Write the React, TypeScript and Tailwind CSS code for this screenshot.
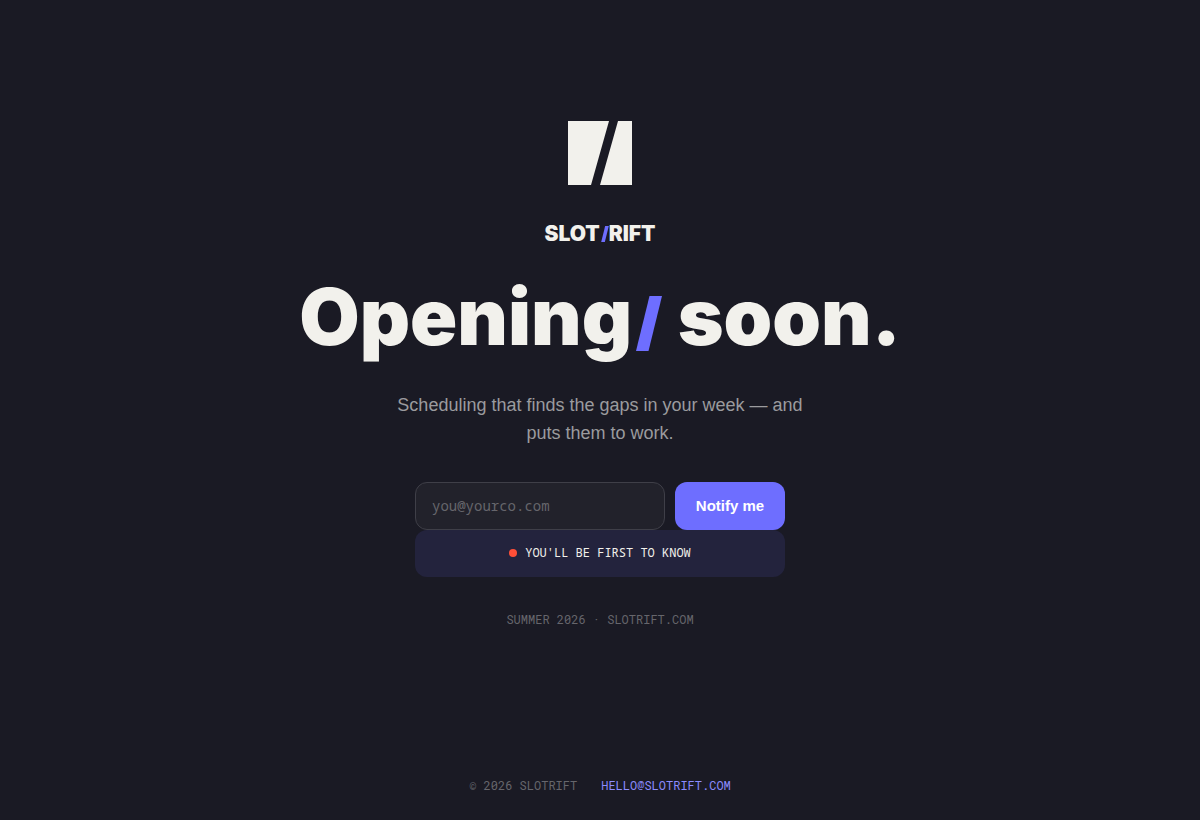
import { useState, type FormEvent } from "react";

function LogoMark() {
  return (
    <svg className="w-16 h-16 text-[#f2f1ec]" viewBox="0 0 64 64" fill="currentColor" aria-hidden="true">
      <path d="M0 0H41L23 64H0Z" />
      <path d="M50 0H64V64H32Z" />
    </svg>
  );
}

function Slash({ className }: { className: string }) {
  return (
    <svg className={`inline-block text-[#6e6eff] ${className}`} viewBox="0 0 26 55" fill="currentColor" aria-hidden="true">
      <path d="M13.5 0H26L12.5 55H0Z" />
    </svg>
  );
}

function NotifyForm() {
  const [email, setEmail] = useState("");

  const handleSubmit = (e: FormEvent) => {
    e.preventDefault();
    setEmail("");
  };

  return (
    <div className="w-full max-w-[370px] mt-[35px]">
      <form onSubmit={handleSubmit} className="flex gap-2.5">
        <input
          type="email"
          aria-label="Email"
          value={email}
          onChange={(e) => setEmail(e.target.value)}
          placeholder="you@yourco.com"
          className="flex-1 min-w-0 h-12 px-4 rounded-xl border border-[#3f3f48] bg-[#22222b] text-sm text-[#f2f1ec] placeholder:text-[#66666c] font-['Noto_Sans_Mono','DejaVu_Sans_Mono',monospace] outline-none focus:border-[#6e6eff]"
        />
        <button
          type="submit"
          className="w-[110px] h-12 pt-0.5 rounded-xl bg-[#6e6eff] hover:bg-[#5c5cf0] text-white text-[15px] font-bold font-['Liberation_Sans',Arial,sans-serif]"
        >
          Notify me
        </button>
      </form>

      <p
        role="status"
        className="flex items-center justify-center gap-2 h-[47px] rounded-xl bg-[#23233d] text-xs text-[#f2f1ec] font-['Noto_Sans_Mono','DejaVu_Sans_Mono',monospace]"
      >
        <span className="w-2 h-2 rounded-full bg-[#ff4f38]" />
        YOU'LL BE FIRST TO KNOW
      </p>
    </div>
  );
}

function App() {
  return (
    <div className="min-h-screen flex flex-col bg-[#1a1a24] text-[#f2f1ec] font-['Liberation_Sans',Arial,sans-serif]">
      <main className="flex-1 flex flex-col items-center justify-center px-6 pb-0.5 text-center">
        <LogoMark />

        <p className="flex items-center mt-[37px] text-[21px] leading-6 font-black font-['Inter',sans-serif]">
          SLOT
          <Slash className="h-4 w-2 ml-px" />
          RIFT
        </p>

        <h1 className="mt-[35px] text-[78px] leading-[72px] font-black font-['Inter',sans-serif]">
          Opening
          <Slash className="h-[55px] w-[26px] ml-1 align-[-6px]" /> soon.
        </h1>

        <p className="max-w-[420px] mt-[38px] text-lg leading-7 text-[#9b9b9e]">
          Scheduling that finds the gaps in your week — and puts them to work.
        </p>

        <NotifyForm />

        <p className="mt-[33px] text-xs leading-[18px] text-[#66666c] font-['Roboto_Mono','Liberation_Mono',monospace]">
          SUMMER 2026 · SLOTRIFT.COM
        </p>
      </main>

      <footer className="flex flex-wrap items-center justify-center gap-6 px-6 py-[26px] text-xs leading-[18px] text-[#66666c] font-['Roboto_Mono','Liberation_Mono',monospace]">
        <span>© 2026 SLOTRIFT</span>
        <a href="mailto:hello@slotrift.com" className="text-[#8c8cff] hover:underline">
          HELLO@SLOTRIFT.COM
        </a>
      </footer>
    </div>
  );
}

export default App;
